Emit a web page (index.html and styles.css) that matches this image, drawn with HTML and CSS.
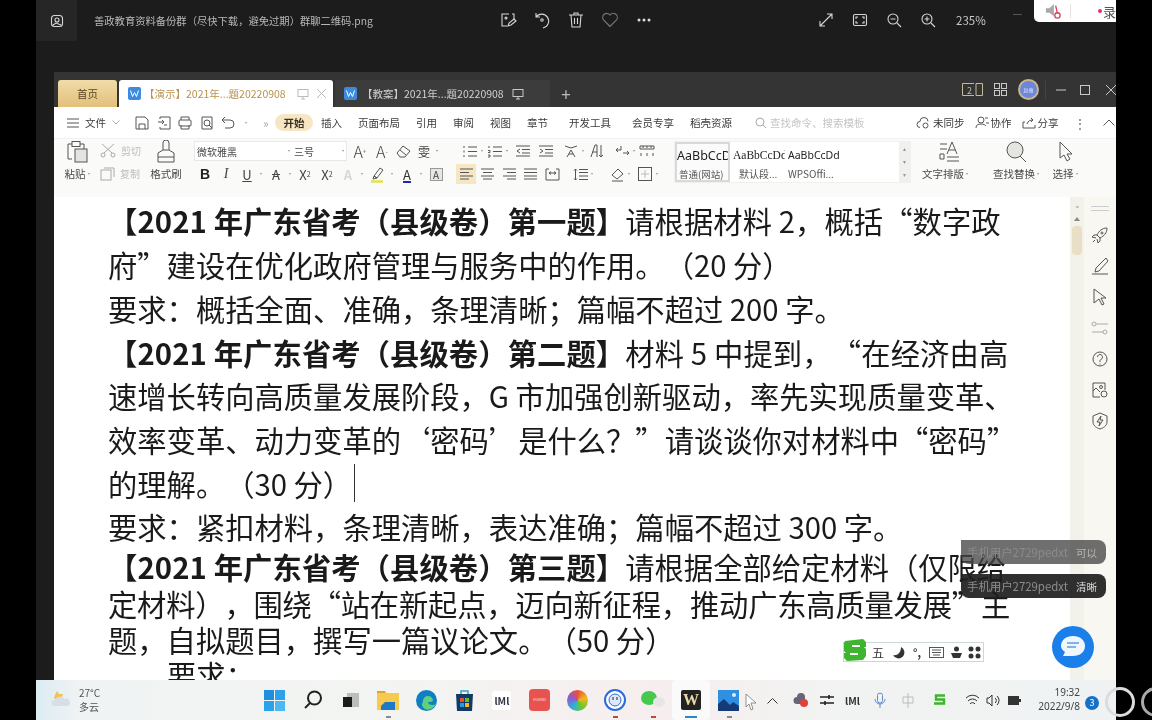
FILE: index.html
```html
<!DOCTYPE html>
<html lang="zh-CN">
<head>
<meta charset="utf-8">
<title>WPS 文字</title>
<link rel="stylesheet" href="styles.css">
</head>
<body>
<div class="screen">
<div class="viewer">
  <div class="vbar">
    <div class="vapp"><svg width="14" height="14" viewBox="0 0 14 14" class="ws"><rect x="1.500" y="1.500" width="11" height="11" rx="3"/><circle cx="7" cy="6" r="2"/><path d="M3 11l3-2 5 2"/></svg></div>
    <div class="vtitle">善政教育资料备份群（尽快下载，避免过期）群聊二维码.png</div>
    <div class="vtools">
      <svg width="18" height="18" viewBox="0 0 18 18" class="ws"><path d="M10 3H3v12h5M15 8V3h-2"/><path d="M9 15l1-3 5-4 2 2-5 4z"/><circle cx="7" cy="7" r="1"/></svg>
      <svg width="18" height="18" viewBox="0 0 18 18" class="ws"><path d="M3 6a7 7 0 1 1 7 11M3 2v4h4"/><circle cx="9" cy="9" r="1.200"/></svg>
      <svg width="18" height="18" viewBox="0 0 16 18" class="ws"><path d="M1 4h14M6 4V2h4v2M3 4l1 12h8l1-12M6.500 7v6M9.500 7v6"/></svg>
      <svg width="18" height="18" viewBox="0 0 18 18" class="ws dim"><path d="M9 15.500L2.500 9a4 4 0 0 1 6.500-5 4 4 0 0 1 6.500 5z"/></svg>
      <svg width="18" height="18" viewBox="0 0 18 18" class="wf"><circle cx="4" cy="9" r="1.500"/><circle cx="9" cy="9" r="1.500"/><circle cx="14" cy="9" r="1.500"/></svg>
    </div>
    <div class="vzoom">
      <svg width="16" height="16" viewBox="0 0 16 16" class="ws"><path d="M2 14L14 2M9 2h5v5M2 9v5h5"/></svg>
      <svg width="16" height="16" viewBox="0 0 16 16" class="ws"><rect x="1.500" y="2.500" width="13" height="11" rx="1.500"/><path d="M4 7V5h2M12 7V5h-2M4 9v2h2M12 9v2h-2"/></svg>
      <svg width="16" height="16" viewBox="0 0 16 16" class="ws"><circle cx="7" cy="7" r="5"/><path d="M11 11l4 4M4.500 7h5"/></svg>
      <svg width="16" height="16" viewBox="0 0 16 16" class="ws"><circle cx="7" cy="7" r="5"/><path d="M11 11l4 4M4.500 7h5M7 4.500v5"/></svg>
      <span class="pct">235%</span>
    </div>
  </div>

  <div class="wps">
    <div class="tabbar">
      <div class="home">首页</div>
      <div class="tab act">
        <svg width="13" height="13" viewBox="0 0 13 13" class="wlogo"><rect width="13" height="13" rx="2"/><path d="M2.500 3.500l2 6 2-4 2 4 2-6"/></svg>
        <span class="tabt">【演示】2021年...题20220908</span>
        <svg width="12" height="12" viewBox="0 0 12 12" class="ts"><rect x="1" y="1.500" width="10" height="7"/><path d="M6 8.500V11M4 11h4"/></svg>
        <svg width="11" height="11" viewBox="0 0 11 11" class="ts"><path d="M1 1l9 9M10 1l-9 9"/></svg>
      </div>
      <div class="tab off">
        <svg width="13" height="13" viewBox="0 0 13 13" class="wlogo"><rect width="13" height="13" rx="2"/><path d="M2.500 3.500l2 6 2-4 2 4 2-6"/></svg>
        <span class="tabt">【教案】2021年...题20220908</span>
        <svg width="12" height="12" viewBox="0 0 12 12" class="tl"><rect x="1" y="1.500" width="10" height="7"/><path d="M6 8.500V11M4 11h4"/></svg>
      </div>
      <div class="plus">+</div>
      <div class="winbtns">
        <svg width="21" height="13" viewBox="0 0 21 13" class="tg"><path d="M12 .5H.5v12H12M14 12.500h6.500V.5H14v12"/><text x="5" y="10.500" class="tn">2</text></svg>
        <svg width="13" height="13" viewBox="0 0 13 13" class="tl"><rect x=".5" y=".5" width="5" height="5"/><rect x="7.500" y=".5" width="5" height="5"/><rect x=".5" y="7.500" width="5" height="5"/><rect x="7.500" y="7.500" width="5" height="5"/></svg>
        <div class="avatar">赵雅</div>
        <div class="wsep"></div>
        <svg width="10" height="10" viewBox="0 0 10 10" class="tl"><path d="M0 5h10"/></svg>
        <svg width="10" height="10" viewBox="0 0 10 10" class="tl wm3"><rect x=".5" y=".5" width="9" height="9"/></svg>
        <svg width="10" height="10" viewBox="0 0 10 10" class="tl wm5"><path d="M0 0l10 10M10 0L0 10"/></svg>
      </div>
    </div>

    <div class="menu">
      <svg width="12" height="10" viewBox="0 0 12 10" class="ic"><path d="M0 1h12M0 5h12M0 9h12"/></svg>
      <span class="file">文件</span>
      <svg width="8" height="5" viewBox="0 0 8 5" class="ic lt"><path d="M.5.5L4 4 7.500.5"/></svg>
      <div class="qa">
        <svg width="14" height="14" viewBox="0 0 14 14" class="ic"><path d="M1 1h9l3 3v9H1zM4 13V8h6v5"/></svg>
        <svg width="14" height="14" viewBox="0 0 14 14" class="ic"><path d="M3 3V1h10v12H3v-2M1 6h6M5 4l2 2-2 2M7 9h3"/></svg>
        <svg width="14" height="14" viewBox="0 0 14 14" class="ic"><rect x="1" y="4" width="12" height="6" rx="1"/><path d="M3 4V1h8v3M3 9v4h8V9"/></svg>
        <svg width="14" height="14" viewBox="0 0 14 14" class="ic"><path d="M12 13H2V1h10z"/><circle cx="7" cy="7" r="3"/><path d="M9 9l3 3"/></svg>
        <svg width="14" height="14" viewBox="0 0 14 14" class="ic"><path d="M1 4h8a4 4 0 0 1 0 8H4M1 4l3-3M1 4l3 3"/></svg>
        <span class="dd"></span>
        <span class="more">»</span>
      </div>
      <div class="mtabs">
        <span class="kai">开始</span><span>插入</span><span>页面布局</span><span>引用</span><span>审阅</span><span>视图</span><span>章节</span><span class="wide">开发工具</span><span class="wide">会员专享</span><span>稻壳资源</span>
      </div>
      <div class="search">
        <svg width="12" height="12" viewBox="0 0 12 12" class="ic lt"><circle cx="5" cy="5" r="4"/><path d="M8 8l3 3"/></svg>
        <span>查找命令、搜索模板</span>
      </div>
      <div class="mright">
        <span class="mi"><svg width="15" height="12" viewBox="0 0 15 12" class="ic"><path d="M4 10.500a3 3 0 0 1 0-6 4 4 0 0 1 8 0"/><circle cx="9.500" cy="8.500" r="2.500"/></svg>未同步</span>
        <span class="mi"><svg width="14" height="13" viewBox="0 0 14 13" class="ic"><circle cx="6" cy="4" r="3"/><path d="M1 12c0-3 2-4 5-4s4 1 5 2M10 2h3M11 7h3"/></svg>协作</span>
        <span class="mi"><svg width="14" height="12" viewBox="0 0 14 12" class="ic"><path d="M3 5H1v6h12V8M5 7c1-3 3-4 6-4M9 1l2 2-2 2"/></svg>分享</span>
        <span class="vdots">⋮</span>
        <svg width="12" height="7" viewBox="0 0 12 7" class="ic"><path d="M.5 6.500L6 1l5.500 5.500"/></svg>
      </div>
    </div>

    <div class="ribbon">
      <div class="big paste">
        <svg width="24" height="24" viewBox="0 0 24 24" class="ic"><path d="M6 19H2V4h4M14 4h4v5"/><rect x="6" y="1.500" width="8" height="5"/><rect x="9" y="9" width="12" height="13" class="ffill"/></svg>
        <span class="lab">粘贴<i class="dd"></i></span>
      </div>
      <div class="cc">
        <div class="cl gray"><svg width="16" height="15" viewBox="0 0 16 15" class="ic lt"><path d="M2 1l10 9M14 1L4 10"/><circle cx="3" cy="12" r="2"/><circle cx="13" cy="12" r="2"/></svg><span>剪切</span></div>
        <div class="cl gray"><svg width="15" height="15" viewBox="0 0 15 15" class="ic lt"><rect x="1" y="4" width="10" height="10"/><path d="M4 2h10v9"/></svg><span>复制</span></div>
      </div>
      <div class="big brush">
        <svg width="20" height="24" viewBox="0 0 20 24" class="ic"><path d="M7 10V3a3 3 0 0 1 6 0v7zM7 10l-5 3v9h16v-9l-5-3M2 17h16"/></svg>
        <span class="lab">格式刷</span>
      </div>
      <div class="fontg">
        <div class="r1">
          <div class="fbox"><span class="fn">微软雅黑</span><i class="dd"></i><span class="fs">三号</span><i class="dd"></i></div>
          <div class="ci t12">A<sup>+</sup></div>
          <div class="ci t12 ml2">A<sup>-</sup></div>
          <div class="ci ml1"><svg width="15" height="13" viewBox="0 0 15 13" class="ic"><path d="M1 8l6-7 7 5-5 6H4zM4 5l6 5"/></svg></div>
          <div class="ci t11 ml1">雯</div><i class="dd"></i>
        </div>
        <div class="r2">
          <div class="ci bold">B</div>
          <div class="ci ital ml1">I</div>
          <div class="ci und ml1">U</div><i class="dd"></i>
          <div class="ci strike">A</div><i class="dd"></i>
          <div class="ci xs">X<sup>2</sup></div>
          <div class="ci xs ml2">X<sub>2</sub></div>
          <div class="ci pale ml1">A</div><i class="dd"></i>
          <div class="ci ml1"><svg width="16" height="17" viewBox="0 0 16 17" class="ic"><path d="M4 10l6-8 3 2-6 8zM3 13l1-3 3 2z"/><path d="M1 15.500h12" class="yl"/></svg></div><i class="dd"></i>
          <div class="ci fcolor">A</div><i class="dd"></i>
          <div class="ci"><span class="boxa">A</span></div>
        </div>
      </div>
      <div class="parag">
        <div class="r1 pl4">
          <div class="ci"><svg width="15" height="13" viewBox="0 0 15 13" class="ic"><path d="M5 2h9M5 6.500h9M5 11h9M1 1v2M1 5.500v2M1 10v2"/></svg></div><i class="dd"></i>
          <div class="ci"><svg width="15" height="13" viewBox="0 0 15 13" class="ic"><path d="M5 2h9M5 6.500h9M5 11h9M1 1v2M0 5.500h2v2H0M0 10h2v2H0"/></svg></div><i class="dd"></i>
          <div class="ci ml3"><svg width="15" height="12" viewBox="0 0 15 12" class="ic"><path d="M0 1h14M6 4.500h8M6 8h8M0 11h14M4 4L1 6l3 2"/></svg></div>
          <div class="ci ml3"><svg width="15" height="12" viewBox="0 0 15 12" class="ic"><path d="M0 1h14M6 4.500h8M6 8h8M0 11h14M1 4l3 2-3 2"/></svg></div>
          <div class="ci ml5"><svg width="15" height="13" viewBox="0 0 15 13" class="ic"><path d="M1 1l6 2 6-2M3 12l4-7 4 7M5 9h4"/></svg></div><i class="dd"></i>
          <div class="ci"><svg width="15" height="14" viewBox="0 0 15 14" class="ic"><path d="M2 13L6 1h2v12M3.500 8H8M12 1v12M10 11l2 2 2-2"/></svg></div>
          <div class="ci ml6"><svg width="15" height="13" viewBox="0 0 15 13" class="ic"><path d="M6 1v4H1M3 3L1 5l2 2M8 8h6M12 6l2 2-2 2M1 8"/></svg></div><i class="dd"></i>
          <div class="ci"><svg width="16" height="12" viewBox="0 0 16 12" class="ic"><path d="M1 1h14v3H1zM4 1v2M8 1v2M12 1v2M2 8v3M8 8v3M14 8v3"/></svg></div>
        </div>
        <div class="r2">
          <div class="ci on"><svg width="13" height="12" viewBox="0 0 13 12" class="ic"><path d="M0 1h13M0 4.500h9M0 8h13M0 11h9"/></svg></div>
          <div class="ci ml1"><svg width="13" height="12" viewBox="0 0 13 12" class="ic"><path d="M0 1h13M2 4.500h9M0 8h13M2 11h9"/></svg></div>
          <div class="ci ml2"><svg width="13" height="12" viewBox="0 0 13 12" class="ic"><path d="M0 1h13M4 4.500h9M0 8h13M4 11h9"/></svg></div>
          <div class="ci ml1"><svg width="13" height="12" viewBox="0 0 13 12" class="ic"><path d="M0 1h13M0 4.500h13M0 8h13M0 11h13"/></svg></div>
          <div class="ci ml2"><svg width="15" height="13" viewBox="0 0 15 13" class="ic"><path d="M1 1v11M14 1v11M1 1h3M11 1h3M1 12h13M4 5h7M6 3.500L4 5l2 1.500M9 3.500L11 5 9 6.500"/></svg></div>
          <div class="ci ml8"><svg width="15" height="13" viewBox="0 0 15 13" class="ic"><path d="M6 1.500h9M6 4.500h9M6 8h9M6 11.500h9M2.500 1v11M1 2.500L2.500 1 4 2.500M1 10.500L2.500 12 4 10.500"/></svg></div><i class="dd"></i>
          <div class="ci ml12"><svg width="15" height="15" viewBox="0 0 15 15" class="ic"><path d="M2 8l6-6 5 5-6 5zM2 14h11"/></svg></div><i class="dd"></i>
          <div class="ci ml3"><svg width="14" height="14" viewBox="0 0 14 14" class="ic"><rect x=".5" y=".5" width="13" height="13"/><path d="M7 3v8M3 7h8" class="pin"/></svg></div><i class="dd"></i>
        </div>
      </div>
      <div class="styles">
        <div class="sc first"><span class="sa">AaBbCcDd</span><span class="sl">普通(网站)</span></div>
        <div class="sc"><span class="sb">AaBbCcDd</span><span class="sl">默认段...</span></div>
        <div class="sc third"><span class="sd">AaBbCcDd</span><span class="sl">WPSOffi...</span></div>
        <div class="sscroll"><i>▴</i><i>▾</i><i>▾</i></div>
      </div>
      <div class="big tstyle">
        <svg width="22" height="22" viewBox="0 0 22 22" class="ic"><path d="M1 3h7M1 8h7M1 13h4v5H1zM8 13l5-12 5 12M10 9h6M8 16h12M8 20h12"/></svg>
        <span class="lab">文字排版<i class="dd"></i></span>
      </div>
      <div class="big find">
        <svg width="24" height="22" viewBox="0 0 24 22" class="ic"><circle cx="10" cy="9" r="8" class="ffill"/><path d="M15 15l6 6"/></svg>
        <span class="lab">查找替换<i class="dd"></i></span>
      </div>
      <div class="big sel">
        <svg width="16" height="22" viewBox="0 0 16 22" class="ic"><path d="M2 1v16l4-3 3 6 3-2-3-5h5z"/></svg>
        <span class="lab">选择<i class="dd"></i></span>
      </div>
    </div>

    <div class="docwrap">
      <div class="page">
        <div class="ln h44 wd1"><b>【2021 年广东省考（县级卷）第一题】</b>请根据材料 2，概括“数字政</div>
        <div class="ln h44">府”建设在优化政府管理与服务中的作用。（20 分）</div>
        <div class="ln h44">要求：概括全面、准确，条理清晰；篇幅不超过 200 字。</div>
        <div class="ln h43 wd2"><b>【2021 年广东省考（县级卷）第二题】</b>材料 5 中提到，“在经济由高</div>
        <div class="ln h44">速增长转向高质量发展阶段，G 市加强创新驱动，率先实现质量变革、</div>
        <div class="ln h44">效率变革、动力变革的‘密码’是什么？”请谈谈你对材料中“密码”</div>
        <div class="ln h43">的理解。（30 分）<i class="caret"></i></div>
        <div class="ln h44">要求：紧扣材料，条理清晰，表达准确；篇幅不超过 300 字。</div>
        <div class="ln h36"><b>【2021 年广东省考（县级卷）第三题】</b>请根据全部给定材料（仅限给</div>
        <div class="ln h37 tight">定材料），围绕“站在新起点，迈向新征程，推动广东高质量发展”主</div>
        <div class="ln h35">题，自拟题目，撰写一篇议论文。（50 分）</div>
        <div class="ln h35 ind">要求：</div>
      </div>
      <div class="vscroll">
        <div class="vs-top">⌄</div>
        <div class="vs-up"></div>
        <div class="thumb"></div>
      </div>
      <div class="side">
        <div class="handle"></div>
        <svg width="18" height="18" viewBox="0 0 18 18" class="ic"><path d="M16 2c-5 0-8 3-10 7l3 3c4-2 7-5 7-10zM6 9H3l-2 2 4 1M9 12v3l-2 2-1-4M2 16l2-2"/><circle cx="11" cy="7" r="1"/></svg>
        <svg width="18" height="18" viewBox="0 0 18 18" class="ic"><path d="M15 1L5 11l-1 4 4-1L17 4zM1 17h16"/></svg>
        <svg width="16" height="18" viewBox="0 0 16 18" class="ic"><path d="M2 1l12 9H9l3 6-2 1-3-6-5 4z"/></svg>
        <svg width="18" height="14" viewBox="0 0 18 14" class="ic lt"><circle cx="3" cy="3" r="2"/><path d="M5 3h12M1 11h11"/><circle cx="14" cy="11" r="2"/></svg>
        <svg width="16" height="16" viewBox="0 0 16 16" class="ic"><circle cx="8" cy="8" r="7"/><path d="M5.500 6a2.500 2.500 0 1 1 4 2L8 9.500V11M8 12.500v1"/></svg>
        <svg width="16" height="16" viewBox="0 0 16 16" class="ic"><path d="M8 15H1V1h12v7M1 9l3-3 4 4"/><circle cx="9" cy="5" r="1.500"/><circle cx="12" cy="12" r="3"/></svg>
        <svg width="16" height="18" viewBox="0 0 16 18" class="ic"><path d="M8 1l7 3v6c0 4-4 6-7 7-3-1-7-3-7-7V4zM9 4L5 10h3l-1 4 4-6H8z"/></svg>
      </div>

      <div class="tip t1"><span>手机用户2729pedxt</span><em>可以</em></div>
      <div class="tip t2"><span>手机用户2729pedxt</span><em>清晰</em></div>
      <div class="ime">
        <svg width="24" height="22" viewBox="0 0 24 22" class="imes"><path d="M2 2L20 0l3 3v5h-6V6H9v2h12l2 2v7l-3 4L4 22l-3-3v-5h6v2h8v-2H3l-2-2V4z"/></svg>
        <span class="wu">五</span>
        <svg width="13" height="13" viewBox="0 0 13 13" class="imef"><path d="M9 1a6 6 0 1 1-8 8c4 1 8-2 8-8z"/></svg>
        <span class="dotc">°,</span>
        <svg width="15" height="11" viewBox="0 0 15 11" class="ic"><rect x=".5" y=".5" width="14" height="10"/><path d="M3 3h9M3 5.500h9M4 8h7"/></svg>
        <svg width="13" height="13" viewBox="0 0 13 13" class="imef"><circle cx="6.500" cy="3" r="2.500"/><path d="M1 7h11l-2 5H3z"/></svg>
        <svg width="13" height="13" viewBox="0 0 13 13" class="imef"><circle cx="3" cy="3" r="2.500"/><circle cx="10" cy="3" r="2.500"/><circle cx="3" cy="10" r="2.500"/><circle cx="10" cy="10" r="2.500"/></svg>
      </div>
      <div class="fab"><svg width="26" height="24" viewBox="0 0 26 24"><path d="M13 1c7 0 12 4 12 10s-5 10-12 10H3l2-4c-3-2-4-4-4-6C1 5 6 1 13 1z" class="fabb"/><path d="M7 8h12M7 12h9" class="fabl"/></svg></div>
    </div>
  </div>

  <div class="recpanel">
    <svg width="18" height="18" viewBox="0 0 18 18"><path d="M1 6h4l5-5v14l-5-4H1z" class="spk"/><path d="M12 3l2 9" class="spr"/><circle cx="14" cy="14" r="3" class="spr"/></svg>
    <i class="recsep"></i>
    <span class="rectxt"><i class="recdot"></i>录</span>
  </div>
  <div class="recminus"></div>

  <div class="taskbar">
    <div class="weather">
      <svg width="22" height="20" viewBox="0 0 22 20"><path d="M7 1l2 3 4 0-1 3 2 2-6 2-4-3 1-3z" class="sun"/><path d="M4 16a3 3 0 0 1 1-6 5 5 0 0 1 9-1 4 4 0 0 1 4 7z" class="cld"/></svg>
      <div class="wtxt"><span>27°C</span><span>多云</span></div>
    </div>
    <div class="apps">
      <div class="app"><svg width="21" height="21" viewBox="0 0 21 21"><path d="M0 0h10v10H0z" class="b1"/><path d="M11 0h10v10H11z" class="b2"/><path d="M0 11h10v10H0z" class="b2"/><path d="M11 11h10v10H11z" class="b3"/></svg></div>
      <div class="app"><svg width="20" height="20" viewBox="0 0 20 20" class="dk"><circle cx="11.500" cy="8" r="6.500"/><path d="M7 13l-5 5"/></svg></div>
      <div class="app"><svg width="18" height="16" viewBox="0 0 18 16"><path d="M5 1h12v14H5z" class="tv2"/><path d="M1 5h9v10H1z" class="tv1"/></svg></div>
      <div class="app mark"><svg width="22" height="20" viewBox="0 0 22 20"><path d="M0 1h8l2 2h12v17H0z" class="fo"/><path d="M0 1h8v2H0z" class="fo2"/><path d="M4 16l4-4h10v8H4z" class="fo3"/></svg></div>
      <div class="app"><svg width="21" height="21" viewBox="0 0 21 21"><circle cx="10.500" cy="10.500" r="10.500" class="e1"/><path d="M7 12a5 5 0 0 1 10-2c0 2-3 2-5 2 0 3 5 4 8 2-2 4-7 7-11 5-3-2-4-5-2-7z" class="e2"/></svg></div>
      <div class="app"><svg width="19" height="21" viewBox="0 0 19 21"><path d="M1 4h17l-1 17H2z" class="st"/><path d="M6 4V1h7v3" class="sth"/><rect x="5" y="8" width="4" height="4" class="r"/><rect x="10" y="8" width="4" height="4" class="gr"/><rect x="5" y="13" width="4" height="4" class="bl"/><rect x="10" y="13" width="4" height="4" class="ye"/></svg></div>
      <div class="app"><div class="mapp">lMl</div></div>
      <div class="app"><div class="hw">HUAWEI</div></div>
      <div class="app"><div class="color"></div></div>
      <div class="app mark red"><svg width="22" height="22" viewBox="0 0 22 22"><circle cx="11" cy="11" r="10" class="cw"/><circle cx="11" cy="11" r="6" class="cb"/><path d="M9 8v3M13 8v3" class="ce"/></svg></div>
      <div class="app mark red"><svg width="26" height="20" viewBox="0 0 26 20"><ellipse cx="9" cy="8" rx="8" ry="7" class="wc"/><ellipse cx="19" cy="12" rx="6" ry="5" class="wc2"/></svg></div>
      <div class="app cur mark"><div class="wpsi">W</div></div>
      <div class="app mark"><svg width="21" height="21" viewBox="0 0 21 21"><rect width="21" height="21" class="ph"/><path d="M0 21V14l6-5 6 6 3-3 6 4v5z" class="ph2"/><circle cx="16" cy="5" r="2" class="ph3"/></svg></div>
    </div>
    <svg class="mouse" width="12" height="18" viewBox="0 0 12 18"><path d="M1 1v13l3-3 2 6 2-1-2-6h5z"/></svg>
    <div class="tray">
      <svg width="11" height="7" viewBox="0 0 11 7" class="dk1"><path d="M.5 6.500l5-5 5 5"/></svg>
      <svg width="16" height="14" viewBox="0 0 16 14"><path d="M4 11a3 3 0 0 1 0-7 4 4 0 0 1 8 0v7z" class="cg"/><circle cx="11" cy="10" r="4" class="rc"/></svg>
      <svg width="14" height="13" viewBox="0 0 14 13" class="dk2"><path d="M0 3h14M0 9h14M9 1v4M5 7v4"/></svg>
      <div class="mm">lMl</div>
      <svg width="12" height="17" viewBox="0 0 12 17" class="mic"><rect x="3.500" y="1" width="5" height="10" rx="2.500"/><path d="M1 7a5 5 0 0 0 10 0M6 12v4"/></svg>
      <svg width="12" height="15" viewBox="0 0 12 15" class="pinn"><path d="M6 0v15M1 4h10v6H1z"/></svg>
      <svg width="14" height="14" viewBox="0 0 14 14" class="sg"><path d="M12 2.500H3v4h8v4H1"/></svg>
      <svg width="15" height="13" viewBox="0 0 15 13" class="dk1"><path d="M1 4a9 9 0 0 1 13 0M3 7a6 6 0 0 1 9 0M5 10a3 3 0 0 1 5 0"/></svg>
      <svg width="14" height="13" viewBox="0 0 14 13" class="dk1"><path d="M1 4h2l3-3v11L3 9H1zM9 4a3 3 0 0 1 0 5M11 2a6 6 0 0 1 0 9"/></svg>
      <svg width="14" height="11" viewBox="0 0 14 11"><rect x="1" y="1" width="11" height="9" class="bat"/><path d="M12 4h2v3h-2z" class="bat"/></svg>
    </div>
    <div class="clock"><span>19:32</span><span>2022/9/8</span></div>
    <div class="badge">3</div>
  </div>
</div>
</div>
<div class="ring"></div>
<div class="ring r-b"></div>
</body>
</html>
```

FILE: styles.css
```css
*{box-sizing:border-box}
html,body{margin:0;height:100%;background:#000;overflow:hidden}
body{font-family:"Noto Sans CJK SC","Noto Sans",sans-serif;position:relative}
i,em{font-style:normal}
.screen{width:1152px;height:720px;padding:0 36px;filter:blur(.35px)}
.viewer{position:relative;width:1080px;height:720px;background:#1c1c1c;display:flex;flex-direction:column;overflow:hidden}

.ws{fill:none;stroke:#d6d6d6;stroke-width:1.100;flex:none}
.ws.dim{stroke:#777}
.wf{fill:#ddd;flex:none}

.vbar{height:72px;display:flex;align-items:flex-start;flex:none}
.vapp{width:41px;height:41px;background:#262626;display:flex;align-items:center;justify-content:center;flex:none}
.vtitle{margin:13px 0 0 17px;width:405px;font-size:10.300px;line-height:15px;color:#b8b8b8;white-space:nowrap;flex:none}
.vtools{display:flex;gap:16px;margin:11px 0 0 0;align-items:center;flex:none}
.vzoom{display:flex;gap:18px;margin:12px 0 0 165px;align-items:center;flex:none}
.pct{font-size:11.500px;line-height:14px;color:#c8c8c8;margin-left:2px}

.wps{margin-left:18px;flex:1;height:608px;display:flex;flex-direction:column;background:#fff;min-height:0}
.tabbar{height:35px;background:#343434;display:flex;align-items:flex-end;padding-left:4px;flex:none}
.home{width:59px;height:27px;border-radius:3px 3px 0 0;background:linear-gradient(#f0dca8,#e2c07a);color:#5a4525;font-size:10.500px;line-height:28px;text-align:center}
.tab{width:214px;height:27px;display:flex;align-items:center;padding:0 7px 0 9px;font-size:10.500px;white-space:nowrap;flex:none}
.tab.act{margin-left:2px;background:#fff;border-radius:3px 3px 0 0;color:#b8924e}
.tab.off{margin-left:2px;background:#3c3c3c;color:#cfcfcf;width:215px}
.tabt{margin-left:3px;width:153px;flex:none}
.tab.off .tabt{margin-left:5px;width:150px}
.ts{fill:none;stroke:#bbb;margin-right:7px;flex:none}
.tl{fill:none;stroke:#c8c8c8;flex:none}
.tg{fill:none;stroke:#c4bb9a;flex:none}
.tn{fill:#c4bb9a;stroke:none;font-size:9px}
.wlogo{flex:none}
.wlogo rect{fill:#3d8be0}
.wlogo path{fill:none;stroke:#fff;stroke-width:1}
.plus{margin-left:9px;width:14px;color:#bbb;font-size:17px;line-height:26px;height:26px;text-align:center}
.winbtns{margin-left:auto;display:flex;align-items:center;gap:11px;height:35px}
.avatar{width:21px;height:21px;border-radius:50%;background:#6d86d8;border:2px solid #c9b48f;color:#dfe6ff;font-size:5px;line-height:17px;text-align:center}
.wsep{width:1px;height:18px;background:#444;margin:0 -1px 0 -5px}
.wm3{margin-left:3px}
.wm5{margin-left:5px}

.ic{fill:none;stroke:#555;stroke-width:1;flex:none}
.ic.lt{stroke:#aaa}
.ffill{fill:#e4e4e0}
.menu{height:32px;flex:none;display:flex;align-items:center;padding-left:13px;background:#fff;font-size:10.500px;color:#3a3a3a;white-space:nowrap;border-bottom:1px solid #f2f2f0}
.file{margin-left:6px}
.menu .file + svg{margin-left:6px}
.qa{display:flex;align-items:center;gap:7.500px;margin-left:15px;flex:none;width:146px}
.more{color:#aaa;font-size:12px;margin-left:7px}
.dd{display:inline-block;width:6px;height:8px;position:relative;flex:none}
.dd::after{content:"";position:absolute;left:2px;top:3px;border:1.500px solid transparent;border-top:2px solid #999}
.mtabs{display:flex;gap:16px;align-items:center;flex:none}
.kai{background:#f6e6c4;border-radius:9px;margin:0 -8px 0 -6px;font-weight:700;color:#3a3120;line-height:17px;width:38px;text-align:center;flex:none}
.wide{margin-left:5px}
.search{display:flex;align-items:center;gap:3px;margin-left:23px;width:161px;color:#c4c4c4;flex:none}
.mright{display:flex;align-items:center;flex:none}
.mi{display:flex;align-items:center;gap:2px;margin-right:10px}
.vdots{margin:0 17px 0 5px;font-size:12px;color:#666}

.ribbon{height:58px;flex:none;display:flex;align-items:flex-start;background:#fafaf8;padding-left:10px;font-size:10px;color:#4a4a4a;white-space:nowrap}
.big{display:flex;flex-direction:column;align-items:center;height:50px;padding-top:1px;flex:none}
.big svg{height:24px}
.lab{margin-top:1px;line-height:17px;font-size:10.500px}
.paste{width:28px}
.cc{margin:3px 0 0 8px;width:43px;display:flex;flex-direction:column;gap:7px}
.cl{display:flex;align-items:center;gap:5px;height:16px}
.gray{color:#bdbdbd}
.brush{width:32px;margin-left:7px}
.fontg{margin:2px 0 0 12px;width:262px;flex:none}
.r1,.r2{display:flex;align-items:center;height:20px}
.r2{margin-top:3px}
.fontg .r2{padding-left:1px}
.fontg .r2 .dd{width:9px}
.fontg .r2 .dd::after{left:3px}
.parag .dd{width:5px}
.parag .dd::after{left:1px}
.fbox{width:153px;height:20px;display:flex;align-items:center;border:1px solid #e8e8e6;background:#fff;padding-left:2px;flex:none;margin-right:3px;font-size:10px}
.fn{width:89px}
.fs{width:46px;margin-left:2px}
.ci{width:20px;height:20px;display:flex;align-items:center;justify-content:center;flex:none;font-size:13px;color:#444}
.ci sup,.ci sub{font-size:7px;line-height:0}
.t12{font-size:16px;font-weight:300}
.t11{font-size:12px}
.bold{font-weight:700;font-size:14px;color:#222;font-family:"Liberation Sans",sans-serif}
.ital{font-style:italic;font-size:14px;font-family:"Liberation Serif",serif}
.und{text-decoration:underline;font-size:13px}
.strike{text-decoration:line-through;font-size:13px}
.xs{font-size:13px}
.pale{color:#d8d8d8;font-weight:700}
.fcolor{text-decoration:underline;text-decoration-color:#1a2aa8;text-decoration-thickness:2px;font-size:13px;color:#333}
.yl{stroke:#e6e04a;stroke-width:2.500}
.pin{stroke:#bbb}
.boxa{width:13px;height:13px;border:1px solid #999;background:#e6e6e6;font-size:10px;line-height:11px;text-align:center}
.ml1{margin-left:1px}.ml2{margin-left:2px}.ml3{margin-left:3px}.ml5{margin-left:5px}.ml6{margin-left:6px}.ml8{margin-left:8px}.ml12{margin-left:12px}
.pl4{padding-left:4px}
.parag{margin:2px 0 0;width:218px;flex:none}
.on{background:#f6e6c4}
.styles{margin:2px 0 0;width:237px;height:42px;display:flex;background:#fff;flex:none;border:1px solid #f0f0ee}
.sc{width:55px;display:flex;flex-direction:column;align-items:flex-start;overflow:hidden;padding:5px 0 0 3px;color:#555;flex:none}
.first{border:2px solid #d9d9d9;background:#fbfbfb;padding:3px 0 0 0}
.sa{font-size:12.500px;line-height:18px;color:#222;font-family:"Noto Sans",sans-serif;white-space:nowrap}
.sb{font-size:11.500px;line-height:16px;font-family:"Liberation Serif",serif;color:#222}
.sd{font-size:10.500px;line-height:16px;color:#222;font-family:"Noto Sans",sans-serif}
.sl{line-height:17px;font-size:10px;margin:2px 0 0 6px}
.first .sl{margin:1px 0 0 2px;font-size:9.500px}
.third .sl{margin-left:0}
.sscroll{margin-left:auto;width:11px;background:#f0f0ee;display:flex;flex-direction:column;align-items:center;font-size:6px;line-height:13px;color:#999}
.tstyle{width:44px;margin-left:13px}
.tstyle svg{margin-left:7px}
.find{width:44px;margin-left:27px}
.sel{width:30px;margin-left:12px}

.docwrap{flex:1;min-height:0;display:flex;position:relative;overflow:hidden;background:#fff}
.page{width:1016px;padding:1px 0 0 54px;overflow:hidden;flex:none;font-size:29.300px;color:#1a1a1a;white-space:nowrap;text-spacing-trim:space-all}
.ln{display:flex;align-items:center;overflow:visible;white-space:pre}
.ln b{font-weight:700;letter-spacing:.1px}
.wd1{letter-spacing:.07px}
.wd2{letter-spacing:.15px}
.tight{letter-spacing:-.2px}
.h44{height:44px}.h43{height:43px}.h37{height:37px}.h36{height:36px}.h35{height:35px}
.ind{padding-left:59px}
.caret{display:inline-block;width:1px;height:38px;background:#333;margin-left:2px}
.vscroll{width:14px;background:#f2f1ea;flex:none;position:relative;display:flex;flex-direction:column;align-items:center;padding-top:3px}
.vs-top{font-size:8px;line-height:10px;color:#999;height:14px}
.vs-up{width:0;height:0;border:3px solid transparent;border-bottom:4px solid #888;margin-bottom:5px}
.thumb{width:10px;height:29px;background:#e9dfc6;border-radius:4px}
.side{width:32px;background:#f8f7f2;flex:none;display:flex;flex-direction:column;align-items:center;padding-top:9px;gap:13px}
.side .ic{height:18px}
.handle{width:18px;height:5px;border-top:1px solid #ccc;border-bottom:1px solid #ccc;margin-bottom:2px}
.tip{position:absolute;left:907px;width:145px;height:24px;border-radius:0 8px 8px 8px;display:flex;align-items:center;justify-content:space-between;padding:0 9px 0 6px;font-size:11.400px;font-family:"Noto Sans CJK SC",sans-serif}
.tip em{font-size:10.500px}
.t1{top:343px;background:rgba(70,70,70,.78);color:#8b8b8b}
.t1 em{color:#b5b5b5}
.t2{top:377px;background:rgba(30,30,30,.92);color:#8d8d8d}
.t2 em{color:#dcdcdc}
.ime{position:absolute;left:789px;top:445px;width:141px;height:20px;padding-left:28px;display:flex;align-items:center;gap:8px;background:#fff;border:1px solid #cfd6d6;font-size:11px;color:#333}
.imes{position:absolute;left:-1px;top:-4px;fill:#3fb42e}
.imef{fill:#333}
.ime .ic + .imef{margin-left:-2px}
.ime .imef:last-child{margin-left:-3px}
.wu{font-size:12px}
.dotc{font-size:11px;font-weight:700;line-height:10px}
.fab{position:absolute;left:998px;top:429px;width:42px;height:42px;border-radius:50%;background:#1a7fe8;display:flex;align-items:center;justify-content:center}
.fabb{fill:#f0f6fd}
.fabl{stroke:#7fb4e8;stroke-width:1.800;fill:none}

.recpanel{position:absolute;right:0;top:0;width:82px;height:22px;background:#fff;border-radius:0 0 0 5px;display:flex;align-items:center;padding-left:11px;overflow:hidden}
.spk{fill:#a9a9a9}
.spr{fill:none;stroke:#e0405a;stroke-width:1.500}
.recsep{width:1px;height:14px;background:#e4e4e4;margin-left:9px;flex:none}
.rectxt{font-size:13px;color:#555;margin-left:27px;white-space:nowrap;display:flex;align-items:center}
.recdot{width:4px;height:4px;border-radius:50%;background:#e8305a;margin-right:1px}
.recminus{position:absolute;left:977px;top:14px;width:9px;height:1px;background:#555}

.taskbar{height:40px;flex:none;background:linear-gradient(90deg,#dcecf3,#f0f3f3 4%,#f3f4f2 35%,#f6eeee 58%,#f1f3f2 75%,#eff2f3);display:flex;align-items:center;position:relative;font-size:10px;color:#555}
.weather{display:flex;align-items:center;gap:7px;margin-left:14px;width:206px;flex:none}
.wtxt{display:flex;flex-direction:column;line-height:14px}
.sun{fill:#f1c44c}.cld{fill:#d6dfe8}
.apps{display:flex}
.app{width:37.830px;height:40px;display:flex;align-items:center;justify-content:center;position:relative;flex:none}
.mark::after{content:"";position:absolute;bottom:2px;left:50%;width:5px;height:2px;margin-left:-2px;background:#8a8a8a}
.red::after{background:#b84a3a}
.cur{background:#fafafa;border-radius:4px}
.cur::after{width:12px;margin-left:-6px;background:#2e86c8}
.b1{fill:#1f8ede}.b2{fill:#2aa3ea}.b3{fill:#4db8f2}
.dk{fill:none;stroke:#222;stroke-width:2}
.tv1{fill:#1c1c1c}.tv2{fill:#bdbdbd}
.fo{fill:#f7ca4e}.fo2{fill:#d8a62e}.fo3{fill:#1d7ac4}
.e1{fill:#0e7fc4}.e2{fill:#5fd07c}
.st{fill:#123a66}.sth{fill:none;stroke:#32a0c8;stroke-width:1.500}
.r{fill:#e8502a}.gr{fill:#6cb82c}.bl{fill:#2a9ae0}.ye{fill:#f0b81c}
.mapp{width:19px;height:19px;background:#fff;border-radius:3px;color:#334;font-weight:700;font-size:10px;line-height:19px;text-align:center}
.hw{width:21px;height:22px;border-radius:4px;background:#e8534f;color:#ffd9d6;font-size:3.500px;line-height:22px;text-align:center}
.color{width:21px;height:21px;border-radius:50%;background:conic-gradient(#e8503a,#f0b81c,#6cc82c,#2fb0d8,#8a5ad8,#e8503a)}
.cw{fill:#fff;stroke:#2a6ae0;stroke-width:2}.cb{fill:#dfe8fa;stroke:#2a6ae0}.ce{stroke:#223;fill:none}
.wc{fill:#46c84c}.wc2{fill:#e6e6e6}
.wpsi{width:20px;height:20px;background:#222;border-radius:2px;color:#e8d9a8;font-family:"Liberation Serif",serif;font-size:16px;line-height:20px;text-align:center;font-weight:700}
.ph{fill:#2f8fe0}.ph2{fill:#143a78}.ph3{fill:#d8eeff}
.mouse{position:absolute;left:709px;top:13px;fill:#fff;stroke:#777;stroke-width:.8}
.tray{position:absolute;left:731px;top:0;height:40px;width:262px;display:flex;align-items:center}
.tray > *{flex:none}
.dk1{fill:none;stroke:#333;stroke-width:1}
.cg{fill:#667}.rc{fill:#e2403a}
.dk2{fill:none;stroke:#222;stroke-width:1.600;margin-left:11px}
.tray svg:nth-child(2){margin-left:15px}
.mm{font-weight:700;color:#333;margin-left:11px;font-size:10px;width:15px}
.mic{fill:none;stroke:#5f8ad0;margin-left:14px}
.pinn{fill:none;stroke:#bbb;margin-left:16px}
.sg{fill:none;stroke:#3fb42e;stroke-width:2.400;margin-left:19px}
.tray svg:nth-child(8){margin-left:18px}
.tray svg:nth-child(9){margin-left:6px}
.tray svg:nth-child(10){margin-left:7px}
.bat{fill:#333}
.clock{position:absolute;right:36px;top:5px;display:flex;flex-direction:column;align-items:flex-end;line-height:14px;font-size:10px;color:#444;font-family:"Noto Sans",sans-serif}
.badge{position:absolute;left:1049px;top:16px;width:14px;height:14px;border-radius:50%;background:#1670c8;color:#fff;font-size:9px;line-height:14px;text-align:center}
.ring{position:absolute;left:1105px;top:687px;width:30px;height:30px;border-radius:50%;border:3px solid #dcdcdc;filter:blur(.6px)}
.r-b{left:1141px;border-color:#aaa}
```
